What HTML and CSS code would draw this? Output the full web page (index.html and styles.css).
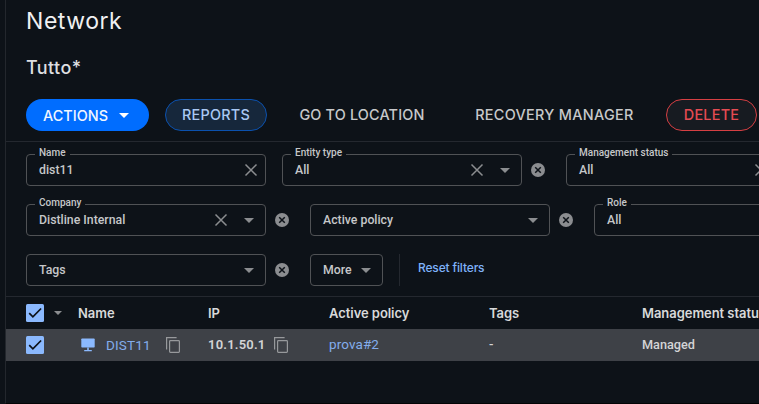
FILE: index.html
```
<!DOCTYPE html>
<html lang="en">
<head>
<meta charset="utf-8">
<title>Network</title>
<link rel="stylesheet" href="styles.css">
</head>
<body>
<svg class="defs" width="0" height="0">
  <symbol id="x" viewBox="0 0 14 14"><path d="M1.5 1.5l11 11M12.5 1.5l-11 11" fill="none" stroke="currentColor" stroke-width="1.5"/></symbol>
  <symbol id="caret" viewBox="0 0 10 5"><path d="M0 0h10L5 5z" fill="currentColor"/></symbol>
  <symbol id="remove" viewBox="0 0 14 14"><circle cx="7" cy="7" r="7" fill="currentColor"/><path d="M4.2 4.2l5.6 5.6M9.8 4.2l-5.6 5.6" stroke="#0d1218" stroke-width="1.5"/></symbol>
  <symbol id="check" viewBox="0 0 18 18"><rect width="18" height="18" rx="1.5" fill="#8bb9fe"/><path d="M3.2 9.2l3.7 3.7 8.2-8.4" fill="none" stroke="#0d1218" stroke-width="1.7"/></symbol>
  <symbol id="copy" viewBox="0 0 14 16"><path d="M.6 12.5V.6h10" fill="none" stroke="currentColor" stroke-width="1.2"/><rect x="3.6" y="3.6" width="9.8" height="11.8" rx=".8" fill="none" stroke="currentColor" stroke-width="1.2"/></symbol>
  <symbol id="monitor" viewBox="0 0 14 14"><rect x=".3" y=".5" width="13.4" height="9" rx=".8" fill="currentColor"/><path d="M6.2 9.5h1.6v2.6H6.2zM3.2 12h7.6v1.3H3.2z" fill="currentColor"/></symbol>
</svg>
<main class="page">
  <header class="head">
    <h1>Network</h1>
    <h2>Tutto*</h2>
    <div class="actions">
      <button class="btn primary">ACTIONS<svg class="caret"><use href="#caret"/></svg></button>
      <button class="btn outline">REPORTS</button>
      <button class="btn plain goto">GO TO LOCATION</button>
      <button class="btn plain recovery">RECOVERY MANAGER</button>
      <button class="btn danger">DELETE</button>
    </div>
  </header>
  <section class="filters">
    <div class="row">
      <div class="field"><label>Name</label><span>dist11</span><svg class="x last"><use href="#x"/></svg></div>
      <div class="field"><label>Entity type</label><span>All</span><svg class="x"><use href="#x"/></svg><svg class="caret"><use href="#caret"/></svg></div>
      <svg class="remove"><use href="#remove"/></svg>
      <div class="field"><label>Management status</label><span>All</span><svg class="x"><use href="#x"/></svg><svg class="caret"><use href="#caret"/></svg></div>
    </div>
    <div class="row">
      <div class="field"><label>Company</label><span>Distline Internal</span><svg class="x"><use href="#x"/></svg><svg class="caret"><use href="#caret"/></svg></div>
      <svg class="remove"><use href="#remove"/></svg>
      <div class="field"><span>Active policy</span><svg class="caret"><use href="#caret"/></svg></div>
      <svg class="remove"><use href="#remove"/></svg>
      <div class="field"><label>Role</label><span>All</span><svg class="x"><use href="#x"/></svg><svg class="caret"><use href="#caret"/></svg></div>
    </div>
    <div class="row">
      <div class="field"><span>Tags</span><svg class="caret"><use href="#caret"/></svg></div>
      <svg class="remove"><use href="#remove"/></svg>
      <div class="field more"><span>More</span><svg class="caret"><use href="#caret"/></svg></div>
      <a class="reset">Reset filters</a>
    </div>
  </section>
  <section class="table">
    <div class="tr th">
      <div class="select"><svg class="check"><use href="#check"/></svg><svg class="caret"><use href="#caret"/></svg></div>
      <div>Name</div><div>IP</div><div>Active policy</div><div>Tags</div><div>Management status</div>
    </div>
    <div class="tr td">
      <div class="select"><svg class="check"><use href="#check"/></svg></div>
      <div class="name"><svg class="monitor"><use href="#monitor"/></svg><a class="device">DIST11</a><svg class="copy"><use href="#copy"/></svg></div>
      <div class="ip"><span>10.1.50.1</span><svg class="copy"><use href="#copy"/></svg></div>
      <div><a class="policy">prova#2</a></div><div>-</div><div class="status">Managed</div>
    </div>
  </section>
</main>
</body>
</html>
```
FILE: styles.css
```
* { box-sizing: border-box; }
body { margin: 0; height: 404px; overflow: hidden; background: #0d1218; color: #d3d4d6; font: 500 13px/16px Roboto, sans-serif; }
.defs { display: block; height: 0; }
svg { flex: none; display: block; }
.page { width: 754px; height: 404px; margin-left: 5px; overflow: hidden; border-left: 1px solid #23272d; border-bottom: 1px solid #030405; }
.head { height: 142px; padding: 8px 0 0 20px; border-bottom: 1px solid #24282f; font-family: Inter, sans-serif; }
h1 { margin: 0; font-size: 23px; line-height: 26px; font-weight: 400; letter-spacing: .55px; color: #f0f0f1; }
h2 { margin: 22px 0 0; font-size: 18px; line-height: 24px; font-weight: 500; letter-spacing: .4px; color: #dedfe0; }
.actions { display: flex; gap: 16px; margin-top: 19px; }
.btn { flex: none; height: 32px; padding: 0 0 1px; border: 1px solid transparent; border-radius: 16px; background: none; color: #c7c8ca; font: 500 14.4px/16px Inter, sans-serif; letter-spacing: .26px; white-space: nowrap; }
.primary { display: flex; align-items: center; width: 123px; padding: 1px 0 0 16px; background: #006dff; color: #f0f6ff; letter-spacing: .03px; }
.primary .caret { margin-left: 11px; }
.outline { width: 102px; background: #16273b; border-color: #0b51ae; color: #a9c8f3; }
.goto { width: 158px; letter-spacing: .18px; }
.recovery { width: 193px; letter-spacing: .32px; margin-left: 1px; }
.danger { width: 91px; margin-left: -1px; background: #171b21; border-color: #d53f43; color: #e54b53; }
.caret { width: 10px; height: 5px; color: #8b8d90; }
.primary .caret { color: #fff; }
.filters { display: flex; flex-direction: column; gap: 18px; padding: 12px 0 0 20px; height: 154px; }
.row { display: flex; align-items: center; height: 32px; }
.field { position: relative; display: flex; align-items: center; flex: none; width: 240px; height: 32px; padding: 0 11px 0 12px; border: 1px solid #505255; border-radius: 4px; color: #c6c7c9; font-size: 12.3px; }
.field + .field { margin-left: 16px; }
.field span { flex: 1; }
.field label { position: absolute; left: 8px; top: -9px; padding: 0 4px; background: #0d1218; font-size: 10px; line-height: 14px; white-space: nowrap; }
.x { width: 14px; height: 14px; color: #8b8d90; margin-right: -3px; }
.x.last { margin-right: -4px; }
.x + .caret { margin-left: 19px; }
.remove { width: 14px; height: 14px; margin: 0 21px 0 9px; color: #8b8d90; }
.more { width: 73px; }
.reset { height: 32px; margin-left: 16px; padding: 6px 0 0 18px; border-left: 1px solid #24282f; color: #7fb2fa; font: 500 12px/16px Inter, sans-serif; letter-spacing: -.15px; }
.table { border-top: 1px solid #24282f; }
.tr { display: grid; grid-template-columns: 52px 130px 121px 160px 153px 1fr; align-items: center; height: 32px; padding-left: 20px; white-space: nowrap; }
.th { font: 600 13px/16px Inter, sans-serif; letter-spacing: -.05px; color: #d8d9da; }
.td { background: #3e4147; }
.select, .name, .ip { display: flex; align-items: center; }
.check { width: 18px; height: 18px; }
.select .caret { width: 8px; height: 4px; margin-left: 10px; }
.name a, .policy { color: #83adec; font-weight: 400; }
.monitor { width: 14px; height: 14px; margin: 0 11px 0 3px; color: #8bb9fe; }
.device { width: 60px; font-size: 13.5px; letter-spacing: .15px; }
.policy { font-size: 13.5px; letter-spacing: .1px; position: relative; top: -1px; }
.ip span { width: 66px; font-weight: 600; letter-spacing: .2px; }
.copy { width: 14px; height: 16px; color: #97999c; }
.status { font-size: 12.7px; }
```
